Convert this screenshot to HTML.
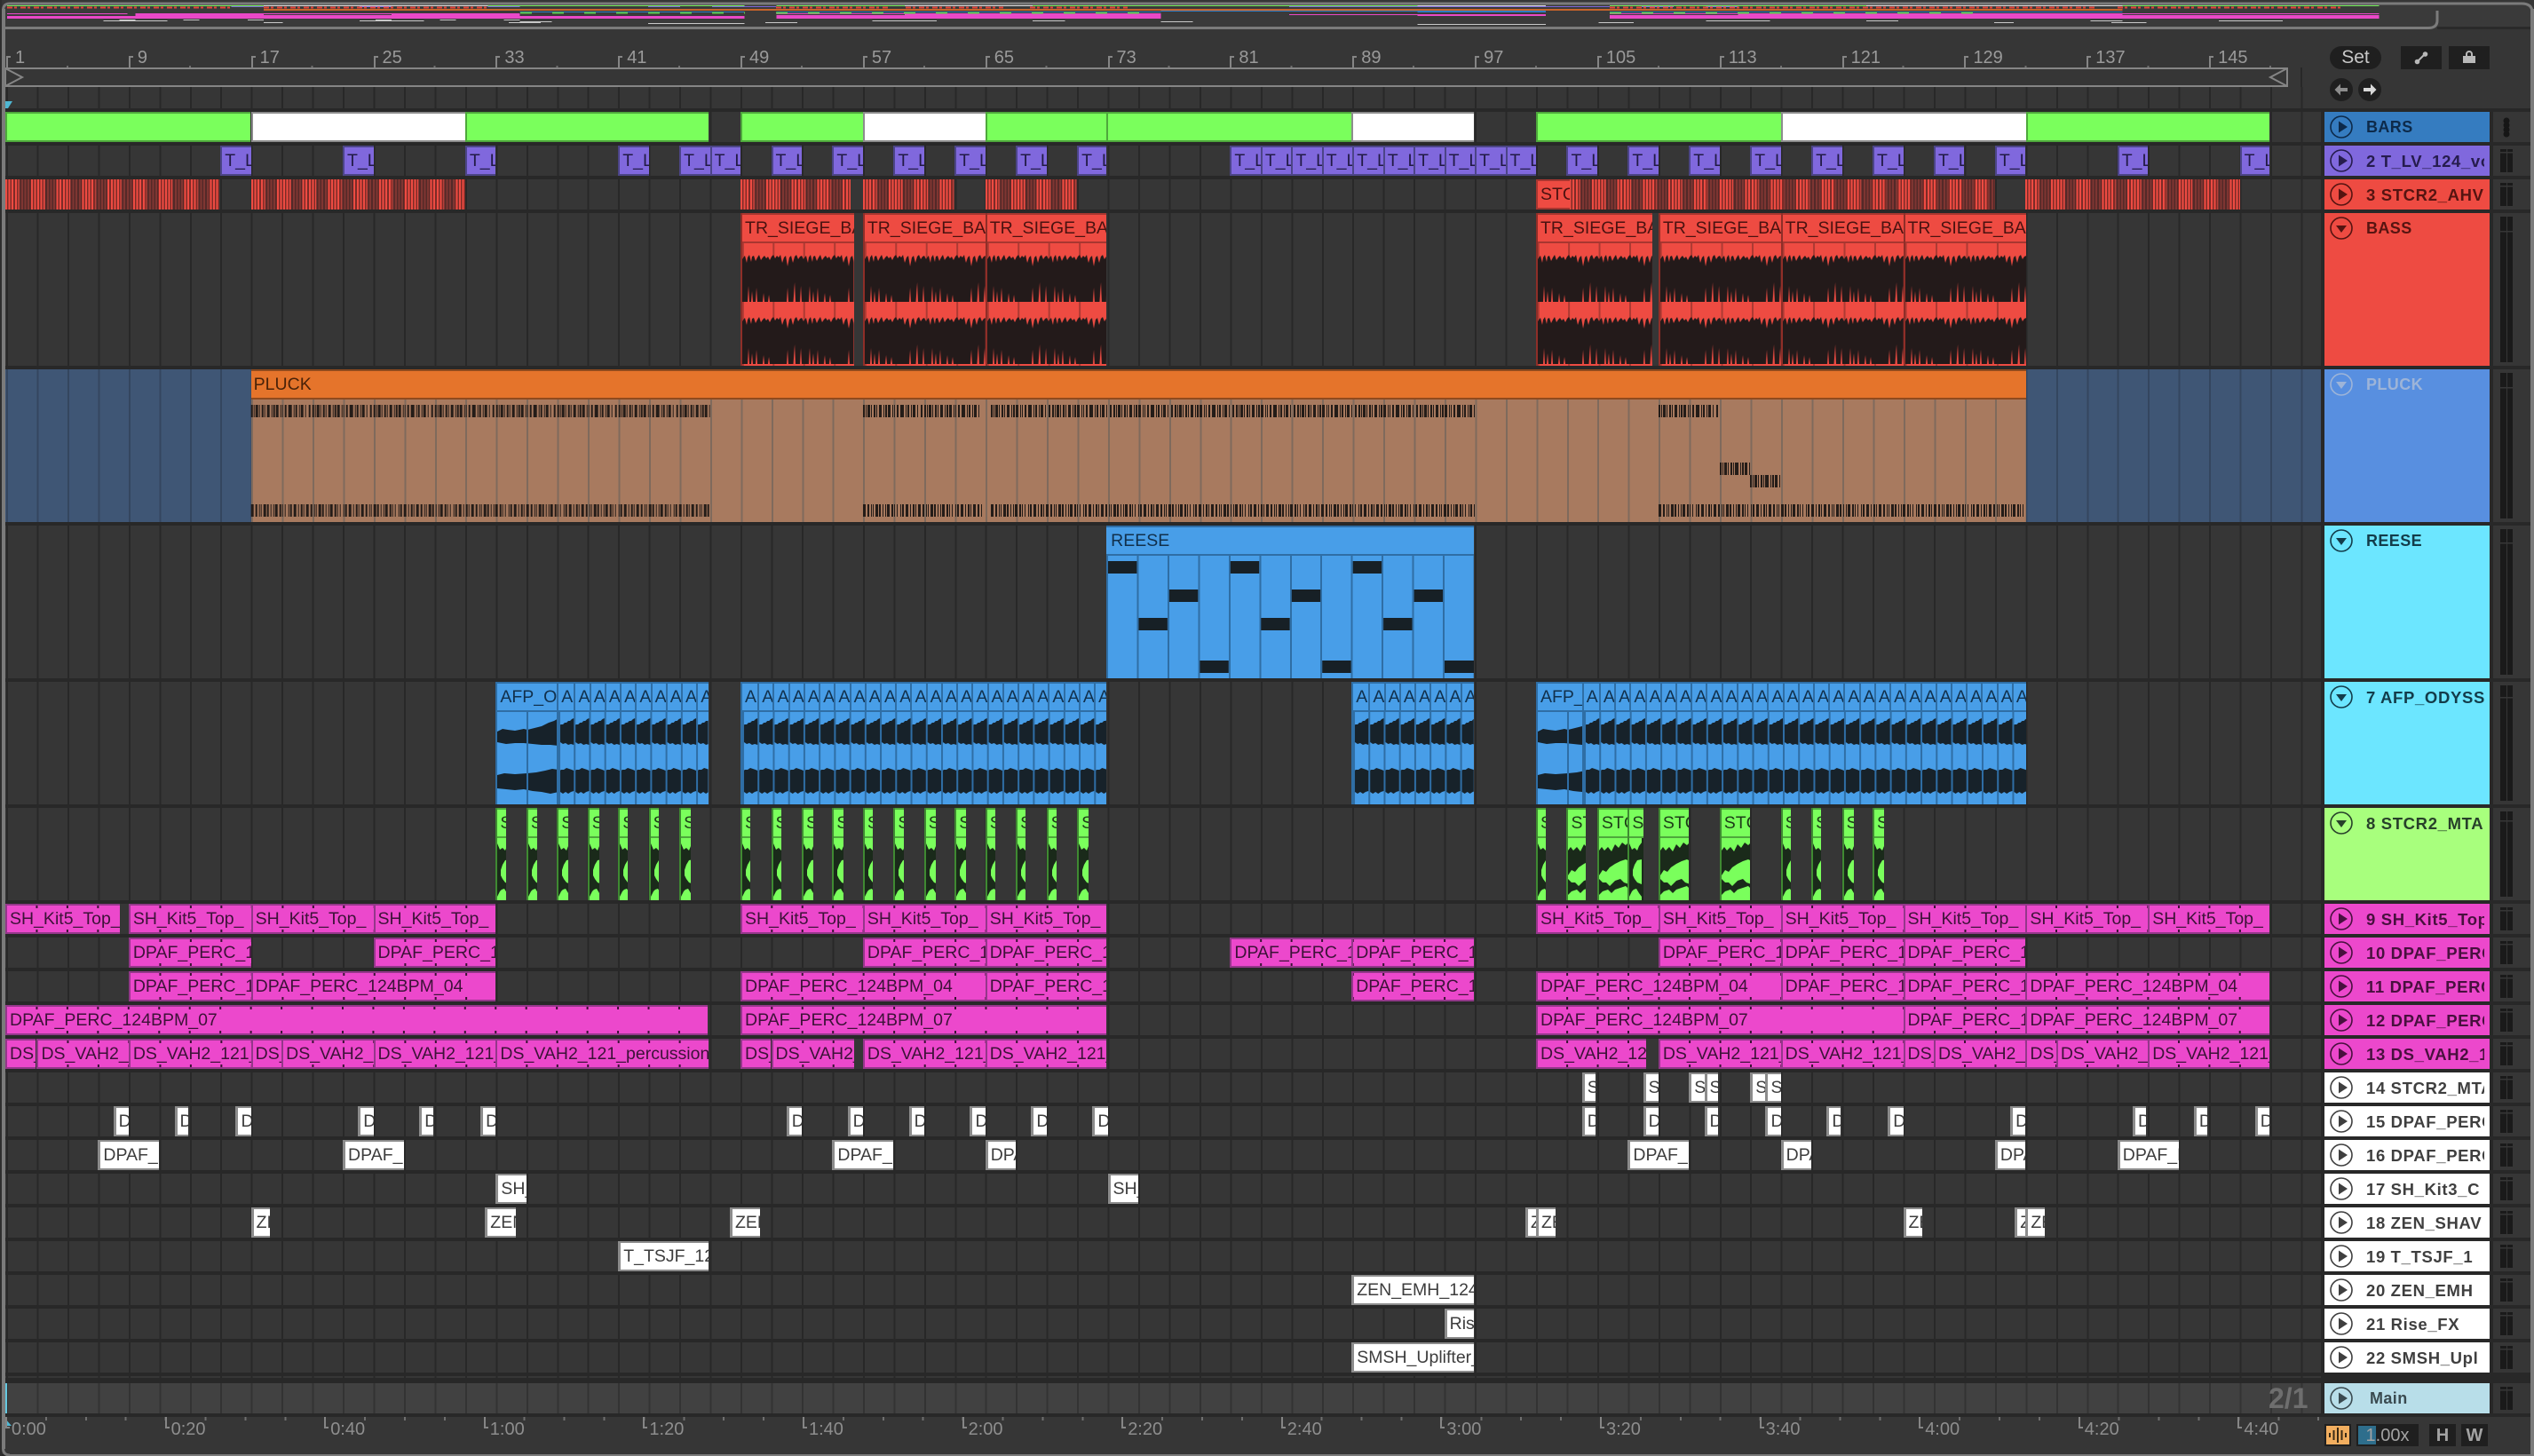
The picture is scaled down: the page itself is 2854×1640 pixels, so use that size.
<!DOCTYPE html>
<html><head><meta charset="utf-8"><title>Arrangement</title>
<style>
:root{--u:17.23px}
html,body{margin:0;padding:0;width:2854px;height:1640px;overflow:hidden;background:#282828}
body{position:relative;font-family:"Liberation Sans",sans-serif}
.bx{position:absolute}
.r{position:absolute;left:6px;width:2608px;height:34px;background:repeating-linear-gradient(90deg,#363636 0 1px,#282828 1px 3px,#363636 3px 34.46px)}
.c{position:absolute;top:0;bottom:0;left:calc(1px + (var(--a) - 1)*var(--u));width:calc((var(--b) - var(--a))*var(--u));overflow:hidden;white-space:nowrap;box-sizing:border-box;font-size:19.5px;line-height:30px;padding-left:3px}
.f{margin-left:-1px}
.p{color:#3d1238;border:solid #94378a;border-width:2px 0 2px 2px;background-color:#ec48cc;background-origin:border-box;background-image:linear-gradient(90deg,#3a1234 2px,transparent 2px),linear-gradient(90deg,#3a1234 2px,transparent 2px);background-size:34.46px 5px,34.46px 5px;background-repeat:repeat-x;background-position:calc((1 - var(--a))*var(--u)) 0,calc((1 - var(--a))*var(--u)) 100%}
.w{color:#3d3d3d;background:#fff;border:solid #8c8c8c;border-width:2px 0 2px 3px}
.t{color:#211a45;background:#8068dd;border:solid #4c4587;border-width:2px 0 2px 2px}
.g{background:#7aff5c;border:solid #4ea83c;border-width:2px 0 2px 2px}
.k{background:#fff;border:solid #8c8c8c;border-width:2px 0 2px 2px}
.s{background:repeating-linear-gradient(90deg,transparent 0 15.6px,rgba(58,40,40,.62) 15.6px 28.7px),repeating-linear-gradient(90deg,#ee4b42 0 2px,#7d2b27 2px 3.6px);padding:0}
.tl{margin:0;height:32px;line-height:32px;padding-left:3px;overflow:hidden;box-sizing:border-box;display:block}
.bs{background-color:#ee4b42;background-image:linear-gradient(90deg,#ad3a33 2px,transparent 2px);background-size:34.46px 100%;background-position:calc((1 - var(--a))*var(--u)) 0;border-left:2px solid #8f2e28;padding:0;color:#4a1210}
.bs .tl{background:#ee4b42;border-top:2px solid #a83630;border-bottom:2px solid #a83630;height:34px;line-height:30px}
.bs svg{position:absolute;left:0;top:32px}
.bl{background:#489ee8;border-left:2px solid #2f6ea5;padding:0;color:#11304c}
.bl .tl{border-top:2px solid #2f6ea5;border-bottom:2px solid #2f6ea5;height:34px;line-height:30px}
.bl svg{position:absolute;left:0;top:34px}
.m{padding:0;display:flex}
.m i{font-style:normal;flex:0 0 var(--u);width:var(--u);box-sizing:border-box;padding-left:3px;overflow:hidden;border-left:2px solid #2f6ea5}
.m i:first-child{border-left:0}
.gc{background:#7aff5c;border-left:2px solid #3f8a32;padding:0;color:#1d3d18}
.gc .tl{height:34px;border-top:2px solid #4ea83c;border-bottom:2px solid #4ea83c;line-height:30px}
.gc svg{position:absolute;left:0;top:34px}
.h{position:absolute;left:2618px;width:186px;height:34px;font-weight:bold;font-size:18.5px;letter-spacing:.65px;overflow:hidden;white-space:nowrap}
.h.b{font-size:18px;letter-spacing:.4px}
.h span{position:absolute;left:47px;top:0;right:6px;overflow:hidden;line-height:35px}
.h svg{position:absolute;left:6px;top:4px;width:26px;height:26px}
.pk{background:#ec48cc;color:#48103e}.wh{background:#fff;color:#3f3f3f}.re{background:#ee4b42;color:#561411}.cy{background:#6ce6ff;color:#133c4a}
.me{position:absolute;left:2808px;width:42px;height:34px;--y:7px;background:linear-gradient(#363636,#363636) 0 var(--y)/100% 1.5px no-repeat,linear-gradient(#1a1a1a,#1a1a1a) 8px 4px/7px calc(100% - 8px) no-repeat,linear-gradient(#1a1a1a,#1a1a1a) 16px 4px/6px calc(100% - 8px) no-repeat,#363636}
.n{position:absolute;top:54px;left:calc(17px + (var(--a) - 1)*var(--u));font-size:20px;line-height:23px;color:#9a9a9a}
.n:before{content:"";position:absolute;left:-10px;top:9px;width:3px;height:11px;border-left:2px solid #858585;border-top:2px solid #858585}
.q{position:absolute;top:1599px;left:calc(13px + var(--k)*179.6px);font-size:20px;line-height:23px;color:#8e8e8e}
.q:before{content:"";position:absolute;left:-7px;top:-3px;width:3px;height:11px;border-left:2px solid #858585;border-bottom:2px solid #858585}
.bt{position:absolute;background:#1f1f1f;box-sizing:border-box;text-align:center;color:#a3a3a3}
</style></head><body>
<svg width="0" height="0" style="position:absolute"><defs>
<symbol id="pl" viewBox="0 0 26 26"><circle cx="13" cy="13" r="12" fill="none" stroke="currentColor" stroke-width="1.6"/><path d="M10 6.5L20 13 10 19.5Z" fill="currentColor"/></symbol>
<symbol id="dn" viewBox="0 0 26 26"><circle cx="13" cy="13" r="12" fill="none" stroke="currentColor" stroke-width="1.6"/><path d="M7 10H19L13 18Z" fill="currentColor"/></symbol>
<path id="bp" d="M0,20L2,17 3,16 5,24 6,18 8,15 10,23 11,17 13,16 15,22 17,18 19,15 21,21 23,18 25,16 27,19 29,17 31,21 33,17 35,15 37,19 39,16 41,18 43,15 45,24 47,18 49,16 51,28 53,18 55,16 57,24 59,17 61,15 63,20 65,17 67,16 69,20V68H67L66,50 65,68H60L59,46 57.5,68H52L51,52 50,68H31L30,60 29,68H25L24,58 23,68H17L16,52 15,68H12L11,56 10,68H8L7,50 6,68H0Z" fill="#231a1a"/>
<pattern id="bw" width="68.92" height="140" patternUnits="userSpaceOnUse"><use href="#bp"/><use href="#bp" y="70"/></pattern>
<pattern id="afw" width="17.23" height="104" patternUnits="userSpaceOnUse"><path d="M0 15L3 14 5 14 7 12 9 12 11 10 13 10 15 8 17.23 7V37L14 36 11 37 8 35 5 36 2 34 0 34Z" fill="#17222a"/><path d="M0 67L3 65 6 65 9 63 12 64 15 65 17.23 66V89L14 90 11 92 8 90 5 92 2 90 0 89Z" fill="#17222a"/><rect x="0" width="2" height="104" fill="#2f6ea5"/></pattern>
<g id="af1"><path d="M0 22L6 19 12 20 20 21 30 19 34 20 42 18 50 16 58 12 64 10 69 7V38L60 37 50 37 40 36 30 35 20 35 10 36 0 34Z" fill="#17222a"/><path d="M0 71L8 69 20 70 34 69 44 68 54 66 62 64 69 65V90L60 92 50 90 40 89 30 87 20 88 10 87 0 86Z" fill="#17222a"/><rect x="33" width="2" height="104" fill="#2f6ea5"/></g>
<g id="gn"><rect width="60" height="70" fill="#1a2a1a"/><path d="M0 0H14V5L11 9 9 14 6 11 3 13 0 6ZM14 24L9 25 6 30 4 36 4 42 6 46 9 50 14 52ZM0 70V66L3 60 5 58 8 57 11 62 14 66V70Z" fill="#7aff5c"/></g>
<g id="gw"><rect width="60" height="70" fill="#1a2a1a"/><path d="M0 0H34V4L30 8 26 5 22 11 18 7 14 15 10 10 6 14 3 10 0 14ZM0 42L4 36 8 38 12 33 18 29 24 26 30 24 34 26V52L28 50 24 46 18 48 12 54 8 50 4 50 0 46ZM0 70V64L4 60 10 58 14 62 18 58 24 56 30 54 34 58V70Z" fill="#7aff5c"/></g>
</defs></svg>

<!-- window frame -->
<div class="bx" style="left:0;top:0;width:2854px;height:122px;background:#363636"></div>
<div class="bx" style="left:6px;top:5px;width:2844px;height:25px;background:#3a3a3a"></div>
<div class="bx" style="left:2745px;top:30px;width:105px;height:3px;background:#2a2a2a"></div>

<!-- overview -->
<svg class="bx" style="left:0;top:0" width="2854" height="34" shape-rendering="crispEdges">
<g transform="translate(8,0) scale(18.05,1)">
<g fill="#74f05a"><rect x="0" y="6" width="16" height="1"/><rect x="30" y="6" width="16" height="1"/><rect x="48" y="6" width="8" height="1"/><rect x="64" y="6" width="24" height="1"/><rect x="100" y="6" width="16" height="1"/><rect x="132" y="6" width="16" height="1"/></g>
<g fill="#dcdcdc"><rect x="16" y="6" width="14" height="1"/><rect x="56" y="6" width="8" height="1"/><rect x="88" y="6" width="8" height="1"/><rect x="116" y="6" width="16" height="1"/></g>
<g fill="#7d68d8"><rect x="14" y="7" width="2" height="1"/><rect x="22" y="7" width="2" height="1"/><rect x="30" y="7" width="2" height="1"/><rect x="40" y="7" width="2" height="1"/><rect x="44" y="7" width="4" height="1"/><rect x="80" y="7" width="20" height="1"/><rect x="102" y="7" width="2" height="1"/><rect x="106" y="7" width="2" height="1"/></g>
<g fill="#c8642a"><rect x="16" y="10" width="116" height="2"/></g>
<g fill="#2e7cc4"><rect x="32" y="13" width="14" height="1"/><rect x="48" y="13" width="24" height="1"/><rect x="72" y="12" width="24" height="1"/><rect x="88" y="13" width="8" height="1"/><rect x="100" y="13" width="32" height="1"/></g>
<g fill="#ea48c8">
<rect x="0" y="15" width="7.5" height="1"/><rect x="8" y="15" width="24" height="1"/><rect x="48" y="15" width="24" height="1"/><rect x="100" y="15" width="48" height="1"/>
<rect x="8" y="16" width="8" height="1"/><rect x="24" y="16" width="8" height="1"/><rect x="56" y="16" width="16" height="1"/><rect x="80" y="16" width="16" height="1"/><rect x="108" y="16" width="24" height="1"/>
<rect x="8" y="17" width="24" height="1"/><rect x="48" y="17" width="24" height="1"/><rect x="88" y="17" width="8" height="1"/><rect x="100" y="17" width="48" height="1"/>
<rect x="0" y="18" width="46" height="1"/><rect x="48" y="18" width="24" height="1"/><rect x="100" y="18" width="48" height="1"/>
<rect x="0" y="19" width="46" height="2"/><rect x="48" y="19" width="24" height="2"/><rect x="100" y="19" width="48" height="2"/>
</g>
<g fill="#c8c8c8">
<rect x="7" y="22" width="1" height="1"/><rect x="11" y="22" width="1" height="1"/><rect x="15" y="22" width="1" height="1"/><rect x="23" y="22" width="1" height="1"/><rect x="27" y="22" width="1" height="1"/><rect x="31" y="22" width="1" height="1"/>
<rect x="6" y="23" width="4" height="1"/><rect x="22" y="23" width="4" height="1"/><rect x="54" y="23" width="4" height="1"/><rect x="64" y="23" width="2" height="1"/><rect x="106" y="23" width="4" height="1"/><rect x="116" y="23" width="2" height="1"/><rect x="130" y="23" width="2" height="1"/><rect x="138" y="23" width="4" height="1"/>
<rect x="32" y="24" width="2" height="1"/><rect x="72" y="24" width="2" height="1"/>
<rect x="16" y="25" width="1.2" height="1"/><rect x="31.3" y="25" width="2" height="1"/><rect x="47.3" y="25" width="2" height="1"/><rect x="99.3" y="25" width="2.2" height="1"/><rect x="124" y="25" width="1.2" height="1"/><rect x="131.3" y="25" width="2.2" height="1"/>
<rect x="40" y="26" width="6" height="1"/><rect x="88" y="27" width="8" height="1"/></g>
</g>
<path d="M8 8.5H261M297 8.5H549M874 8.5H1000M1020 8.5H1130M1160 8.5H1270M1813 8.5H2360M2385 8.5H2640" stroke="#e8453c" stroke-width="2" fill="none" stroke-dasharray="6 2 3 4"/>
<path d="M586 14.5H839M874 14.5H1290M1813 14.5H2230" stroke="#5ec84a" stroke-width="2" fill="none" stroke-dasharray="13 23"/>
</svg>
<svg class="bx" style="left:0;top:0" width="2854" height="40" fill="none">
<path d="M3.5 122V12Q3.5 4 11 4H2840Q2852 4 2852 14V60" stroke="#7b7b7b" stroke-width="3"/>
<path d="M6 31.5H2735Q2745 31.500 2745 23V12" stroke="#7b7b7b" stroke-width="3"/>
</svg>

<!-- ruler -->
<div class="bx" style="left:6px;top:74px;width:2570px;height:2px;background:repeating-linear-gradient(90deg,transparent 0 69px,#6f6f6f 69px 71px,transparent 71px 137.84px)"></div>
<span class="n" style="--a:1">1</span><span class="n" style="--a:9">9</span><span class="n" style="--a:17">17</span><span class="n" style="--a:25">25</span><span class="n" style="--a:33">33</span><span class="n" style="--a:41">41</span><span class="n" style="--a:49">49</span><span class="n" style="--a:57">57</span><span class="n" style="--a:65">65</span><span class="n" style="--a:73">73</span><span class="n" style="--a:81">81</span><span class="n" style="--a:89">89</span><span class="n" style="--a:97">97</span><span class="n" style="--a:105">105</span><span class="n" style="--a:113">113</span><span class="n" style="--a:121">121</span><span class="n" style="--a:129">129</span><span class="n" style="--a:137">137</span><span class="n" style="--a:145">145</span>
<svg class="bx" style="left:0;top:74px" width="2620" height="26" fill="none">
<path d="M6 3H2576V23H6ZM6 3L25 13 6 23M2576 3L2557 13 2576 23" stroke="#858585" stroke-width="2"/>
</svg>
<div class="r" style="top:98px;height:24px"></div>
<div class="bx" style="left:2590.500px;top:76px;width:2px;height:22px;background:#282828"></div>
<svg class="bx" style="left:6px;top:114px" width="9" height="9"><path d="M0 0H8L3 8H0Z" fill="#4fb7d3"/></svg>
<div class="bx" style="left:2618px;top:33px;width:232px;height:89px;background:#363636"></div>

<!-- BARS -->
<div class="r" style="top:126px">
<div class="c g f" style="--a:1;--b:17"></div><div class="c k" style="--a:17;--b:31"></div><div class="c g" style="--a:31;--b:46.9"></div><div class="c g" style="--a:49;--b:57"></div><div class="c k" style="--a:57;--b:65"></div><div class="c g" style="--a:65;--b:72.92"></div><div class="c g" style="--a:72.92;--b:88.94"></div><div class="c k" style="--a:88.94;--b:96.94"></div><div class="c g" style="--a:101;--b:117"></div><div class="c k" style="--a:117;--b:133.04"></div><div class="c g" style="--a:133.04;--b:148.95"></div>
</div>
<!-- 2 T_LV -->
<div class="r" style="top:164px">
<div class="c t" style="--a:15;--b:17">T_LV_124</div><div class="c t" style="--a:23;--b:25">T_LV_124</div><div class="c t" style="--a:31;--b:33">T_LV_124</div><div class="c t" style="--a:41;--b:43">T_LV_124</div><div class="c t" style="--a:45;--b:47">T_LV_124</div><div class="c t" style="--a:47;--b:49">T_LV_124</div><div class="c t" style="--a:51;--b:53">T_LV_124</div><div class="c t" style="--a:55;--b:57">T_LV_124</div><div class="c t" style="--a:59;--b:61">T_LV_124</div><div class="c t" style="--a:63;--b:65">T_LV_124</div><div class="c t" style="--a:67;--b:69">T_LV_124</div><div class="c t" style="--a:71;--b:72.92">T_LV_124</div>
<div class="c t" style="--a:81;--b:83">T_LV_124</div><div class="c t" style="--a:83;--b:85">T_LV_124</div><div class="c t" style="--a:85;--b:87">T_LV_124</div><div class="c t" style="--a:87;--b:89">T_LV_124</div><div class="c t" style="--a:89;--b:91">T_LV_124</div><div class="c t" style="--a:91;--b:93">T_LV_124</div><div class="c t" style="--a:93;--b:95">T_LV_124</div><div class="c t" style="--a:95;--b:97">T_LV_124</div><div class="c t" style="--a:97;--b:99">T_LV_124</div><div class="c t" style="--a:99;--b:101">T_LV_124</div>
<div class="c t" style="--a:103;--b:105">T_LV_124</div><div class="c t" style="--a:107;--b:109">T_LV_124</div><div class="c t" style="--a:111;--b:113">T_LV_124</div><div class="c t" style="--a:115;--b:117">T_LV_124</div><div class="c t" style="--a:119;--b:121">T_LV_124</div><div class="c t" style="--a:123;--b:125">T_LV_124</div><div class="c t" style="--a:127;--b:129">T_LV_124</div><div class="c t" style="--a:131;--b:133">T_LV_124</div><div class="c t" style="--a:139;--b:141">T_LV_124</div><div class="c t" style="--a:147;--b:148.95">T_LV_124</div>
</div>
<!-- 3 STCR2 -->
<div class="r" style="top:202px">
<div class="c s f" style="--a:1;--b:15"></div><div class="c s" style="--a:17;--b:31"></div><div class="c s" style="--a:49;--b:56.2"></div><div class="c s" style="--a:57;--b:63"></div><div class="c s" style="--a:65;--b:71"></div><div class="c s" style="--a:103;--b:131"></div><div class="c s" style="--a:133;--b:147"></div>
<div class="c" style="--a:101;--b:103.2;background:#ee4b42;border:solid #a83630;border-width:2px 0 2px 2px;color:#4a1210;">STCR2</div>
</div>
<!-- BASS -->
<div class="r" style="top:240px;height:172px">
<div class="c bs" style="--a:49;--b:56.4"><p class="tl">TR_SIEGE_BASS</p><svg width="100%" height="140"><rect width="100%" height="140" fill="url(#bw)"/></svg></div>
<div class="c bs" style="--a:57;--b:65"><p class="tl">TR_SIEGE_BASS</p><svg width="100%" height="140"><rect width="100%" height="140" fill="url(#bw)"/></svg></div>
<div class="c bs" style="--a:65;--b:72.92"><p class="tl">TR_SIEGE_BASS</p><svg width="100%" height="140"><rect width="100%" height="140" fill="url(#bw)"/></svg></div>
<div class="c bs" style="--a:101;--b:108.6"><p class="tl">TR_SIEGE_BASS</p><svg width="100%" height="140"><rect width="100%" height="140" fill="url(#bw)"/></svg></div>
<div class="c bs" style="--a:109;--b:117"><p class="tl">TR_SIEGE_BASS</p><svg width="100%" height="140"><rect width="100%" height="140" fill="url(#bw)"/></svg></div>
<div class="c bs" style="--a:117;--b:125"><p class="tl">TR_SIEGE_BASS</p><svg width="100%" height="140"><rect width="100%" height="140" fill="url(#bw)"/></svg></div>
<div class="c bs" style="--a:125;--b:133.04"><p class="tl">TR_SIEGE_BASS</p><svg width="100%" height="140"><rect width="100%" height="140" fill="url(#bw)"/></svg></div>
</div>
<!-- PLUCK -->
<div class="r" style="top:416px;height:172px;background:repeating-linear-gradient(90deg,#3f5675 0 1px,#34465f 1px 3px,#3f5675 3px 34.46px)">
<div class="c" style="--a:17;--b:133.04;padding:0;background:repeating-linear-gradient(90deg,#7f6a5c 0 2px,#a87a5f 2px 34.46px)">
<p class="tl" style="background:#e5742b;color:#4a2208;border-top:2px solid #8f4a1e;border-bottom:2px solid #8f4a1e;height:34px;line-height:30px">PLUCK</p></div>
<svg class="bx" style="left:0;top:0" width="2608" height="172" fill="none" stroke="#241c18" stroke-width="14">
<path stroke-dasharray="2 1 1 1 3 1 1 2 2 1 1 2 3 2 1 1 2 1 3 2 1 1 1 2 2 2 4 2 1 1 2 2 1 1 3 2 1 3 2 2" d="M276.700 47H793.600M966 47H1100M1110 47H1655M1862 47H1931"/>
<path stroke-dasharray="2 1 1 1 3 1 1 2 2 1 1 1 4 2 1 1 2 1 3 2 1 1 1 2 2 1 5 2 1 1 2 2 1 1 3 1 1 3 2 1" d="M1931 112H1965"/>
<path stroke-dasharray="2 1 1 1 3 1 1 2 2 1 1 1 4 2 1 1 2 1 3 2 1 1 1 2 2 1 5 2 1 1 2 2 1 1 3 1 1 3 2 1" d="M1965 126H2000"/>
<path stroke-dasharray="3 2 2 2 1 1 1 2 3 1 2 2 1 2 1 1 3 2 2 1 1 2 1 3 1 1 2 2 3 2 1 2 2 1 1 2" d="M276.700 159H793.600M966 159H1100M1110 159H1655M1862 159H2275"/>
</svg>
</div>
<!-- REESE -->
<div class="r" style="top:592px;height:172px">
<div class="c" style="--a:72.92;--b:96.94;padding:0;background:repeating-linear-gradient(90deg,#2f6ea5 0 2px,#489ee8 2px 34.46px);color:#11304c">
<p class="tl" style="background:#489ee8;border-top:2px solid #2f6ea5;border-bottom:2px solid #2f6ea5;height:34px;line-height:30px;padding-left:5px">REESE</p>
<svg class="bx" style="left:0;top:0" width="414" height="172" fill="#172026"><rect x="2" y="40" width="32.4" height="14"/><rect x="139.800" y="40" width="32.4" height="14"/><rect x="277.700" y="40" width="32.4" height="14"/><rect x="36.500" y="104" width="32.4" height="14"/><rect x="174.300" y="104" width="32.4" height="14"/><rect x="312.100" y="104" width="32.4" height="14"/><rect x="70.900" y="72" width="32.4" height="14"/><rect x="208.800" y="72" width="32.4" height="14"/><rect x="346.600" y="72" width="32.4" height="14"/><rect x="105.400" y="152" width="32.4" height="14"/><rect x="243.200" y="152" width="32.4" height="14"/><rect x="381" y="152" width="33" height="14"/></svg>
</div></div>
<!-- AFP -->
<div class="r" style="top:768px;height:138px">
<div class="c bl" style="--a:33;--b:37"><p class="tl">AFP_ODYSSEY</p><svg width="100%" height="104"><use href="#af1"/></svg></div>
<div class="c bl" style="--a:37;--b:46.9"><p class="tl m"><i>A</i><i>A</i><i>A</i><i>A</i><i>A</i><i>A</i><i>A</i><i>A</i><i>A</i><i>A</i></p><svg width="100%" height="104"><rect width="100%" height="104" fill="url(#afw)"/></svg></div>
<div class="c bl" style="--a:49;--b:72.92"><p class="tl m"><i>A</i><i>A</i><i>A</i><i>A</i><i>A</i><i>A</i><i>A</i><i>A</i><i>A</i><i>A</i><i>A</i><i>A</i><i>A</i><i>A</i><i>A</i><i>A</i><i>A</i><i>A</i><i>A</i><i>A</i><i>A</i><i>A</i><i>A</i><i>A</i></p><svg width="100%" height="104"><rect width="100%" height="104" fill="url(#afw)"/></svg></div>
<div class="c bl" style="--a:88.94;--b:96.94"><p class="tl m"><i>A</i><i>A</i><i>A</i><i>A</i><i>A</i><i>A</i><i>A</i><i>A</i></p><svg width="100%" height="104"><rect width="100%" height="104" fill="url(#afw)"/></svg></div>
<div class="c bl" style="--a:101;--b:104"><p class="tl">AFP_ODYSSEY</p><svg width="100%" height="104"><use href="#af1"/></svg></div>
<div class="c bl" style="--a:104;--b:133.04"><p class="tl m"><i>A</i><i>A</i><i>A</i><i>A</i><i>A</i><i>A</i><i>A</i><i>A</i><i>A</i><i>A</i><i>A</i><i>A</i><i>A</i><i>A</i><i>A</i><i>A</i><i>A</i><i>A</i><i>A</i><i>A</i><i>A</i><i>A</i><i>A</i><i>A</i><i>A</i><i>A</i><i>A</i><i>A</i><i>A</i></p><svg width="100%" height="104"><rect width="100%" height="104" fill="url(#afw)"/></svg></div>
</div>
<!-- 8 STCR2_MTA -->
<div class="r" style="top:910px;height:104px">
<div class="c gc" style="--a:33;--b:33.7"><p class="tl">STCR2</p><svg width="100%" height="70"><use href="#gn"/></svg></div>
<div class="c gc" style="--a:35;--b:35.7"><p class="tl">STCR2</p><svg width="100%" height="70"><use href="#gn"/></svg></div>
<div class="c gc" style="--a:37;--b:37.75"><p class="tl">STCR2</p><svg width="100%" height="70"><use href="#gn"/></svg></div>
<div class="c gc" style="--a:39;--b:39.75"><p class="tl">STCR2</p><svg width="100%" height="70"><use href="#gn"/></svg></div>
<div class="c gc" style="--a:41;--b:41.65"><p class="tl">STCR2</p><svg width="100%" height="70"><use href="#gn"/></svg></div>
<div class="c gc" style="--a:43;--b:43.65"><p class="tl">STCR2</p><svg width="100%" height="70"><use href="#gn"/></svg></div>
<div class="c gc" style="--a:45;--b:45.75"><p class="tl">STCR2</p><svg width="100%" height="70"><use href="#gn"/></svg></div>
<div class="c gc" style="--a:49;--b:49.65"><p class="tl">STCR2</p><svg width="100%" height="70"><use href="#gn"/></svg></div>
<div class="c gc" style="--a:51;--b:51.65"><p class="tl">STCR2</p><svg width="100%" height="70"><use href="#gn"/></svg></div>
<div class="c gc" style="--a:53;--b:53.75"><p class="tl">STCR2</p><svg width="100%" height="70"><use href="#gn"/></svg></div>
<div class="c gc" style="--a:55;--b:55.75"><p class="tl">STCR2</p><svg width="100%" height="70"><use href="#gn"/></svg></div>
<div class="c gc" style="--a:57;--b:57.65"><p class="tl">STCR2</p><svg width="100%" height="70"><use href="#gn"/></svg></div>
<div class="c gc" style="--a:59;--b:59.65"><p class="tl">STCR2</p><svg width="100%" height="70"><use href="#gn"/></svg></div>
<div class="c gc" style="--a:61;--b:61.75"><p class="tl">STCR2</p><svg width="100%" height="70"><use href="#gn"/></svg></div>
<div class="c gc" style="--a:63;--b:63.75"><p class="tl">STCR2</p><svg width="100%" height="70"><use href="#gn"/></svg></div>
<div class="c gc" style="--a:65;--b:65.65"><p class="tl">STCR2</p><svg width="100%" height="70"><use href="#gn"/></svg></div>
<div class="c gc" style="--a:67;--b:67.65"><p class="tl">STCR2</p><svg width="100%" height="70"><use href="#gn"/></svg></div>
<div class="c gc" style="--a:69;--b:69.65"><p class="tl">STCR2</p><svg width="100%" height="70"><use href="#gn"/></svg></div>
<div class="c gc" style="--a:71;--b:71.75"><p class="tl">STCR2</p><svg width="100%" height="70"><use href="#gn"/></svg></div>
<div class="c gc" style="--a:101;--b:101.65"><p class="tl">STCR2</p><svg width="100%" height="70"><use href="#gn"/></svg></div>
<div class="c gc" style="--a:103;--b:104.25"><p class="tl">STCR2</p><svg width="100%" height="70"><use href="#gw"/></svg></div>
<div class="c gc" style="--a:105;--b:107"><p class="tl">STCR2</p><svg width="100%" height="70"><use href="#gw"/></svg></div>
<div class="c gc" style="--a:107;--b:108"><p class="tl">STCR2</p><svg width="100%" height="70"><use href="#gn"/></svg></div>
<div class="c gc" style="--a:109;--b:111"><p class="tl">STCR2</p><svg width="100%" height="70"><use href="#gw"/></svg></div>
<div class="c gc" style="--a:113;--b:115"><p class="tl">STCR2</p><svg width="100%" height="70"><use href="#gw"/></svg></div>
<div class="c gc" style="--a:117;--b:117.65"><p class="tl">STCR2</p><svg width="100%" height="70"><use href="#gn"/></svg></div>
<div class="c gc" style="--a:119;--b:119.65"><p class="tl">STCR2</p><svg width="100%" height="70"><use href="#gn"/></svg></div>
<div class="c gc" style="--a:121;--b:121.75"><p class="tl">STCR2</p><svg width="100%" height="70"><use href="#gn"/></svg></div>
<div class="c gc" style="--a:123;--b:123.75"><p class="tl">STCR2</p><svg width="100%" height="70"><use href="#gn"/></svg></div>
</div>
<!-- 9 -->
<div class="r" style="top:1018px">
<div class="c p f" style="--a:1;--b:8.49">SH_Kit5_Top_</div><div class="c p" style="--a:9;--b:17">SH_Kit5_Top_</div><div class="c p" style="--a:17;--b:25">SH_Kit5_Top_</div><div class="c p" style="--a:25;--b:33">SH_Kit5_Top_</div><div class="c p" style="--a:49;--b:57">SH_Kit5_Top_</div><div class="c p" style="--a:57;--b:65">SH_Kit5_Top_</div><div class="c p" style="--a:65;--b:72.92">SH_Kit5_Top_</div><div class="c p" style="--a:101;--b:109">SH_Kit5_Top_</div><div class="c p" style="--a:109;--b:117">SH_Kit5_Top_</div><div class="c p" style="--a:117;--b:125">SH_Kit5_Top_</div><div class="c p" style="--a:125;--b:133">SH_Kit5_Top_</div><div class="c p" style="--a:133;--b:141">SH_Kit5_Top_</div><div class="c p" style="--a:141;--b:148.95">SH_Kit5_Top_</div>
</div>
<!-- 10 -->
<div class="r" style="top:1056px">
<div class="c p" style="--a:9;--b:17">DPAF_PERC_124</div><div class="c p" style="--a:25;--b:33">DPAF_PERC_124</div><div class="c p" style="--a:57;--b:65">DPAF_PERC_124</div><div class="c p" style="--a:65;--b:72.92">DPAF_PERC_124</div><div class="c p" style="--a:81;--b:88.94">DPAF_PERC_124</div><div class="c p" style="--a:88.94;--b:96.94">DPAF_PERC_124</div><div class="c p" style="--a:109;--b:117">DPAF_PERC_124</div><div class="c p" style="--a:117;--b:125">DPAF_PERC_124</div><div class="c p" style="--a:125;--b:133">DPAF_PERC_124</div>
</div>
<!-- 11 -->
<div class="r" style="top:1094px">
<div class="c p" style="--a:9;--b:17">DPAF_PERC_124</div><div class="c p" style="--a:17;--b:33">DPAF_PERC_124BPM_04</div><div class="c p" style="--a:49;--b:65">DPAF_PERC_124BPM_04</div><div class="c p" style="--a:65;--b:72.92">DPAF_PERC_124</div><div class="c p" style="--a:88.94;--b:96.94">DPAF_PERC_124</div><div class="c p" style="--a:101;--b:117">DPAF_PERC_124BPM_04</div><div class="c p" style="--a:117;--b:125">DPAF_PERC_124</div><div class="c p" style="--a:125;--b:133">DPAF_PERC_124</div><div class="c p" style="--a:133;--b:148.95">DPAF_PERC_124BPM_04</div>
</div>
<!-- 12 -->
<div class="r" style="top:1132px">
<div class="c p f" style="--a:1;--b:46.9">DPAF_PERC_124BPM_07</div><div class="c p" style="--a:49;--b:72.92">DPAF_PERC_124BPM_07</div><div class="c p" style="--a:101;--b:125">DPAF_PERC_124BPM_07</div><div class="c p" style="--a:125;--b:133">DPAF_PERC_124</div><div class="c p" style="--a:133;--b:148.95">DPAF_PERC_124BPM_07</div>
</div>
<!-- 13 -->
<div class="r" style="top:1170px">
<div class="c p f" style="--a:1;--b:3">DS_VAH2</div><div class="c p" style="--a:3;--b:9">DS_VAH2_121</div><div class="c p" style="--a:9;--b:17">DS_VAH2_121_</div><div class="c p" style="--a:17;--b:19">DS_VAH2</div><div class="c p" style="--a:19;--b:25">DS_VAH2_121</div><div class="c p" style="--a:25;--b:33">DS_VAH2_121_</div><div class="c p" style="--a:33;--b:46.9">DS_VAH2_121_percussion</div>
<div class="c p" style="--a:49;--b:51">DS_VAH2</div><div class="c p" style="--a:51;--b:56.4">DS_VAH2_121</div><div class="c p" style="--a:57;--b:65">DS_VAH2_121_</div><div class="c p" style="--a:65;--b:72.92">DS_VAH2_121_</div>
<div class="c p" style="--a:101;--b:108.2">DS_VAH2_121_</div><div class="c p" style="--a:109;--b:117">DS_VAH2_121_</div><div class="c p" style="--a:117;--b:125">DS_VAH2_121_</div><div class="c p" style="--a:125;--b:127">DS_VAH2</div><div class="c p" style="--a:127;--b:133">DS_VAH2_121</div><div class="c p" style="--a:133;--b:135">DS_VAH2</div><div class="c p" style="--a:135;--b:141">DS_VAH2_121</div><div class="c p" style="--a:141;--b:148.95">DS_VAH2_121_</div>
</div>
<!-- 14 -->
<div class="r" style="top:1208px">
<div class="c w" style="--a:104;--b:104.9">STCR</div><div class="c w" style="--a:108;--b:109">STCR</div><div class="c w" style="--a:111;--b:112">STCR</div><div class="c w" style="--a:112;--b:112.9">STCR</div><div class="c w" style="--a:115;--b:116">STCR</div><div class="c w" style="--a:116;--b:117">STCR</div>
</div>
<!-- 15 -->
<div class="r" style="top:1246px">
<div class="c w" style="--a:8;--b:9">DPAF</div><div class="c w" style="--a:12;--b:12.9">DPAF</div><div class="c w" style="--a:16;--b:17">DPAF</div><div class="c w" style="--a:24;--b:25">DPAF</div><div class="c w" style="--a:28;--b:28.9">DPAF</div><div class="c w" style="--a:32;--b:33">DPAF</div><div class="c w" style="--a:52;--b:53">DPAF</div><div class="c w" style="--a:56;--b:57">DPAF</div><div class="c w" style="--a:60;--b:61">DPAF</div><div class="c w" style="--a:64;--b:65">DPAF</div><div class="c w" style="--a:68;--b:69">DPAF</div><div class="c w" style="--a:72;--b:73">DPAF</div><div class="c w" style="--a:104;--b:104.9">DPAF</div><div class="c w" style="--a:108;--b:109">DPAF</div><div class="c w" style="--a:112;--b:112.9">DPAF</div><div class="c w" style="--a:116;--b:117">DPAF</div><div class="c w" style="--a:120;--b:120.9">DPAF</div><div class="c w" style="--a:124;--b:125">DPAF</div><div class="c w" style="--a:132;--b:133">DPAF</div><div class="c w" style="--a:140;--b:140.9">DPAF</div><div class="c w" style="--a:144;--b:144.9">DPAF</div><div class="c w" style="--a:148;--b:148.95">DPAF</div>
</div>
<!-- 16 -->
<div class="r" style="top:1284px">
<div class="c w" style="--a:7;--b:11">DPAF_PERC</div><div class="c w" style="--a:23;--b:27">DPAF_PERC</div><div class="c w" style="--a:55;--b:59">DPAF_PERC</div><div class="c w" style="--a:65;--b:67">DPAF_PERC</div><div class="c w" style="--a:107;--b:111">DPAF_PERC</div><div class="c w" style="--a:117;--b:119">DPAF_PERC</div><div class="c w" style="--a:131;--b:133">DPAF_PERC</div><div class="c w" style="--a:139;--b:143">DPAF_PERC</div>
</div>
<!-- 17 -->
<div class="r" style="top:1322px">
<div class="c w" style="--a:33;--b:35">SH_Kit3</div><div class="c w" style="--a:73;--b:75">SH_Kit3</div>
</div>
<!-- 18 -->
<div class="r" style="top:1360px">
<div class="c w" style="--a:17;--b:18.25">ZEN_SHAV</div><div class="c w" style="--a:32.3;--b:34.3">ZEN_SHAV</div><div class="c w" style="--a:48.3;--b:50.25">ZEN_SHAV</div><div class="c w" style="--a:100.3;--b:101">ZEN_SHAV</div><div class="c w" style="--a:101;--b:102.25">ZEN_SHAV</div><div class="c w" style="--a:125;--b:126.25">ZEN_SHAV</div><div class="c w" style="--a:132.3;--b:133">ZEN_SHAV</div><div class="c w" style="--a:133;--b:134.25">ZEN_SHAV</div>
</div>
<!-- 19 -->
<div class="r" style="top:1398px"><div class="c w" style="--a:41;--b:46.9">T_TSJF_124BPM</div></div>
<!-- 20 -->
<div class="r" style="top:1436px"><div class="c w" style="--a:88.94;--b:96.94">ZEN_EMH_124BPM</div></div>
<!-- 21 -->
<div class="r" style="top:1474px"><div class="c w" style="--a:95;--b:96.94">Rise_FX</div></div>
<!-- 22 -->
<div class="r" style="top:1512px"><div class="c w" style="--a:88.94;--b:96.94">SMSH_Uplifter_FX</div></div>
<div class="r" style="top:1550px;height:2px"></div>

<!-- Main strip -->
<div class="r" style="top:1558px;background:repeating-linear-gradient(90deg,#414141 0 1px,#333 1px 3px,#414141 3px 34.46px)">
<div class="bx" style="left:2549px;top:0;height:34px;line-height:35px;font-size:32px;font-weight:bold;color:#6e6e6e">2/1</div>
</div>
<div class="bx" style="left:6px;top:1558px;width:2px;height:34px;background:#64c8e0"></div>

<!-- time ruler -->
<div class="bx" style="left:2px;top:1596px;width:2848px;height:42px;background:#363636"></div>
<div class="bx" style="left:6px;top:1596px;width:2608px;height:4px;background:repeating-linear-gradient(90deg,#6f6f6f 0 2px,transparent 2px 44.9px)"></div>
<svg class="bx" style="left:6px;top:1598px" width="9" height="9"><path d="M0 0L7 8H0Z" fill="#4fb7d3"/></svg>
<span class="q" style="--k:0">0:00</span><span class="q" style="--k:1">0:20</span><span class="q" style="--k:2">0:40</span><span class="q" style="--k:3">1:00</span><span class="q" style="--k:4">1:20</span><span class="q" style="--k:5">1:40</span><span class="q" style="--k:6">2:00</span><span class="q" style="--k:7">2:20</span><span class="q" style="--k:8">2:40</span><span class="q" style="--k:9">3:00</span><span class="q" style="--k:10">3:20</span><span class="q" style="--k:11">3:40</span><span class="q" style="--k:12">4:00</span><span class="q" style="--k:13">4:20</span><span class="q" style="--k:14">4:40</span>

<!-- top right buttons -->
<div class="bt" style="left:2624px;top:52px;width:58px;height:26px;border-radius:13px;font-size:21px;line-height:26px;color:#c8c8c8">Set</div>
<div class="bt" style="left:2704px;top:52px;width:46px;height:26px"></div>
<div class="bt" style="left:2758px;top:52px;width:46px;height:26px"></div>
<svg class="bx" style="left:2704px;top:52px" width="100" height="26"><path d="M19 17L27 9" stroke="#b8b8b8" stroke-width="2"/><circle cx="18.500" cy="17.500" r="2.800" fill="#b8b8b8"/><circle cx="27.500" cy="9" r="2.800" fill="#b8b8b8"/><path d="M70 11V19H84V11ZM73 11V9A4 4 0 0 1 81 9V11H79V9A2 2 0 0 0 75 9V11Z" fill="#b8b8b8"/></svg>
<div class="bt" style="left:2624px;top:88px;width:26px;height:26px;border-radius:13px"></div>
<div class="bt" style="left:2656px;top:88px;width:26px;height:26px;border-radius:13px"></div>
<svg class="bx" style="left:2624px;top:88px" width="58" height="26"><path d="M5.500 13L12 6.500V11H20V15H12V19.500Z" fill="#8c8c8c"/><path d="M52.500 13L46 6.500V11H38V15H46V19.500Z" fill="#d8d8d8"/></svg>

<!-- track headers -->
<div class="h b" style="top:126px;background:#357cc0;color:#0d2a4a"><svg><use href="#pl"/></svg><span>BARS</span></div>
<div class="h" style="top:164px;background:#8068dd;color:#261c4e"><svg><use href="#pl"/></svg><span>2 T_LV_124_vox</span></div>
<div class="h re" style="top:202px"><svg><use href="#pl"/></svg><span>3 STCR2_AHVOX</span></div>
<div class="h re b" style="top:240px;height:172px"><svg><use href="#dn"/></svg><span>BASS</span></div>
<div class="h b" style="top:416px;height:172px;background:#588fe0;color:#9db4d8"><svg><use href="#dn"/></svg><span>PLUCK</span></div>
<div class="h cy b" style="top:592px;height:172px"><svg><use href="#dn"/></svg><span>REESE</span></div>
<div class="h cy" style="top:768px;height:138px"><svg><use href="#dn"/></svg><span>7 AFP_ODYSSEY</span></div>
<div class="h" style="top:910px;height:104px;background:#a8ff7d;color:#27402a"><svg><use href="#dn"/></svg><span>8 STCR2_MTA</span></div>
<div class="h pk" style="top:1018px"><svg><use href="#pl"/></svg><span>9 SH_Kit5_Top</span></div>
<div class="h pk" style="top:1056px"><svg><use href="#pl"/></svg><span>10 DPAF_PERC</span></div>
<div class="h pk" style="top:1094px"><svg><use href="#pl"/></svg><span>11 DPAF_PERC</span></div>
<div class="h pk" style="top:1132px"><svg><use href="#pl"/></svg><span>12 DPAF_PERC</span></div>
<div class="h pk" style="top:1170px"><svg><use href="#pl"/></svg><span>13 DS_VAH2_12</span></div>
<div class="h wh" style="top:1208px"><svg><use href="#pl"/></svg><span>14 STCR2_MTA</span></div>
<div class="h wh" style="top:1246px"><svg><use href="#pl"/></svg><span>15 DPAF_PERC</span></div>
<div class="h wh" style="top:1284px"><svg><use href="#pl"/></svg><span>16 DPAF_PERC</span></div>
<div class="h wh" style="top:1322px"><svg><use href="#pl"/></svg><span>17 SH_Kit3_C</span></div>
<div class="h wh" style="top:1360px"><svg><use href="#pl"/></svg><span>18 ZEN_SHAV</span></div>
<div class="h wh" style="top:1398px"><svg><use href="#pl"/></svg><span>19 T_TSJF_1</span></div>
<div class="h wh" style="top:1436px"><svg><use href="#pl"/></svg><span>20 ZEN_EMH</span></div>
<div class="h wh" style="top:1474px"><svg><use href="#pl"/></svg><span>21 Rise_FX</span></div>
<div class="h wh" style="top:1512px"><svg><use href="#pl"/></svg><span>22 SMSH_Upl</span></div>
<div class="h b" style="top:1558px;background:#b8dee9;color:#3a4a50"><svg><use href="#pl"/></svg><span style="left:51px">Main</span></div>

<!-- meters -->
<div class="me" style="top:126px;background:#363636"></div>
<svg class="bx" style="left:2808px;top:126px" width="42" height="34" fill="#161616"><circle cx="15" cy="10" r="3.500"/><circle cx="15" cy="15" r="3.500"/><circle cx="15" cy="20" r="3.500"/><circle cx="15" cy="25" r="3.500"/></svg>
<div class="me" style="top:164px"></div><div class="me" style="top:202px"></div>
<div class="me" style="top:240px;height:172px;--y:20px"></div>
<div class="me" style="top:416px;height:172px;--y:20px"></div>
<div class="me" style="top:592px;height:172px;--y:19px"></div>
<div class="me" style="top:768px;height:138px;--y:17px"></div>
<div class="me" style="top:910px;height:104px;--y:14px"></div>
<div class="me" style="top:1018px"></div><div class="me" style="top:1056px"></div><div class="me" style="top:1094px"></div><div class="me" style="top:1132px"></div><div class="me" style="top:1170px"></div><div class="me" style="top:1208px"></div><div class="me" style="top:1246px"></div><div class="me" style="top:1284px"></div><div class="me" style="top:1322px"></div><div class="me" style="top:1360px"></div><div class="me" style="top:1398px"></div><div class="me" style="top:1436px"></div><div class="me" style="top:1474px"></div><div class="me" style="top:1512px"></div><div class="me" style="top:1558px"></div>

<!-- footer buttons -->
<svg class="bx" style="left:2618px;top:1604px" width="30" height="25"><rect x="1" y="1" width="28" height="23" fill="#f2ae5f" stroke="#1f1f1f" stroke-width="2"/><path d="M6 10V15M10.500 7V18M15 4V21M19.500 7V18M24 10V15" stroke="#3a2a14" stroke-width="2"/></svg>
<div class="bt" style="left:2654px;top:1604px;width:70px;height:25px;line-height:26px;font-size:20px;overflow:hidden"><div class="bx" style="left:2px;top:2px;width:20px;height:21px;background:#2e6e8c"></div><span style="position:relative">1.00x</span></div>
<div class="bt" style="left:2736px;top:1604px;width:30px;height:25px;line-height:26px;font-size:20px;font-weight:bold">H</div>
<div class="bt" style="left:2772px;top:1604px;width:30px;height:25px;line-height:26px;font-size:20px;font-weight:bold">W</div>

<!-- borders -->
<div class="bx" style="left:0;top:0;width:2px;height:1640px;background:#2e2e2e"></div>
<div class="bx" style="left:2px;top:10px;width:4px;height:1622px;background:#7b7b7b"></div>
<div class="bx" style="left:2850px;top:10px;width:4px;height:1630px;background:#7b7b7b"></div>
<div class="bx" style="left:8px;top:1638px;width:2846px;height:2px;background:#7b7b7b"></div>
<svg class="bx" style="left:0;top:1625px" width="12" height="15"><path d="M3.500 0V6Q3.500 14 11 14" fill="none" stroke="#7b7b7b" stroke-width="3"/></svg>
</body></html>
